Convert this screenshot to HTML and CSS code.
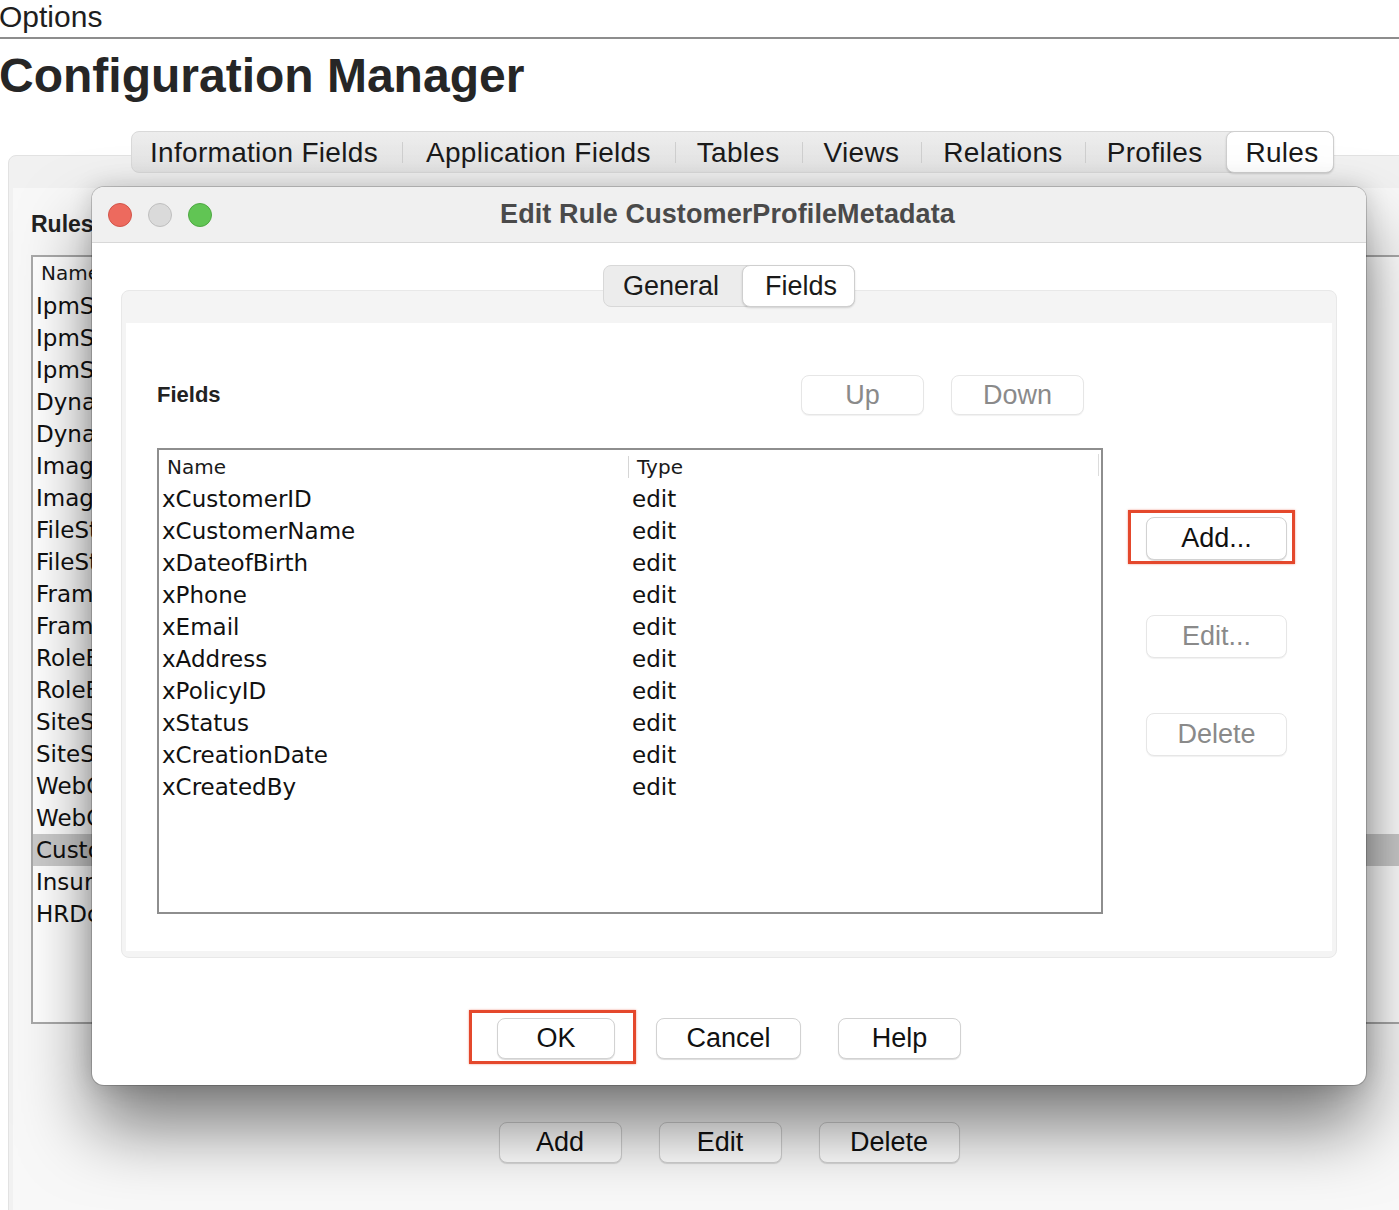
FILE: index.html
```html
<!DOCTYPE html>
<html lang="en">
<head>
<meta charset="utf-8">
<title>Configuration Manager</title>
<link rel="stylesheet" href="styles.css">
</head>
<body>
<div class="app">
  <div class="menubar"><span class="menu-title">Options</span></div>
  <h1 class="page-title">Configuration Manager</h1>

  <div class="workspace">
    <nav class="tabs">
      <span class="tab tab-wide tab-first">Information Fields</span>
      <span class="tab tab-wide">Application Fields</span>
      <span class="tab">Tables</span>
      <span class="tab">Views</span>
      <span class="tab">Relations</span>
      <span class="tab">Profiles</span>
      <span class="tab active">Rules</span>
    </nav>

    <section class="panel">
      <div class="panel-inner">
        <h2 class="section-label">Rules</h2>
        <div class="list">
          <div class="list-head">Name</div>
          <div class="list-row">IpmSystemRuleDefault</div>
          <div class="list-row">IpmSearchRuleDefault</div>
          <div class="list-row">IpmScanRuleDefault</div>
          <div class="list-row">DynamicConverterRule</div>
          <div class="list-row">DynamicConverterFields</div>
          <div class="list-row">ImageRenditionRule</div>
          <div class="list-row">ImageRenditionFields</div>
          <div class="list-row">FileStoreProviderRule</div>
          <div class="list-row">FileStoreProviderFields</div>
          <div class="list-row">FrameworkFoldersRule</div>
          <div class="list-row">FrameworkFoldersFields</div>
          <div class="list-row">RoleBasedAccessRule</div>
          <div class="list-row">RoleBasedAccessFields</div>
          <div class="list-row">SiteStudioRule</div>
          <div class="list-row">SiteStudioFields</div>
          <div class="list-row">WebCenterContentRule</div>
          <div class="list-row">WebCenterContentFields</div>
          <div class="list-row selected">CustomerProfileMetadata</div>
          <div class="list-row">InsurancePolicyMetadata</div>
          <div class="list-row">HRDocumentMetadata</div>
        </div>
        <div class="button-row">
          <button class="btn w-123">Add</button>
          <button class="btn w-123">Edit</button>
          <button class="btn w-141">Delete</button>
        </div>
      </div>
    </section>
  </div>

  <div class="dialog">
    <div class="titlebar">
      <div class="lights">
        <span class="light red"></span>
        <span class="light grey"></span>
        <span class="light green"></span>
      </div>
      <div class="title">Edit Rule CustomerProfileMetadata</div>
      <div></div>
    </div>

    <div class="dialog-body">
      <div class="segmented">
        <span class="seg">General</span>
        <span class="seg active">Fields</span>
      </div>

      <div class="tabpanel">
        <div class="tabpanel-inner">
          <div class="fields-head">
            <span class="fields-label">Fields</span>
            <div class="order-buttons">
              <button class="btn disabled w-123">Up</button>
              <button class="btn disabled w-133">Down</button>
            </div>
          </div>
          <div class="spacer"></div>

          <div class="ftable">
            <div class="fhead">
              <span class="hcell">Name</span>
              <span class="hcell type">Type</span>
            </div>
            <div class="frow"><span>xCustomerID</span><span class="tcell">edit</span></div>
            <div class="frow"><span>xCustomerName</span><span class="tcell">edit</span></div>
            <div class="frow"><span>xDateofBirth</span><span class="tcell">edit</span></div>
            <div class="frow"><span>xPhone</span><span class="tcell">edit</span></div>
            <div class="frow"><span>xEmail</span><span class="tcell">edit</span></div>
            <div class="frow"><span>xAddress</span><span class="tcell">edit</span></div>
            <div class="frow"><span>xPolicyID</span><span class="tcell">edit</span></div>
            <div class="frow"><span>xStatus</span><span class="tcell">edit</span></div>
            <div class="frow"><span>xCreationDate</span><span class="tcell">edit</span></div>
            <div class="frow"><span>xCreatedBy</span><span class="tcell">edit</span></div>
          </div>

          <div class="side-buttons">
            <button class="btn w-141 tall annot annot-add">Add...</button>
            <button class="btn disabled w-141 tall">Edit...</button>
            <button class="btn disabled w-141 tall">Delete</button>
          </div>
        </div>
      </div>

      <div class="dialog-actions">
        <button class="btn w-118 btn-ok annot annot-ok">OK</button>
        <button class="btn w-145">Cancel</button>
        <button class="btn w-123">Help</button>
      </div>
    </div>
  </div>
</div>
</body>
</html>
```

FILE: styles.css
```css
* { box-sizing: border-box; }

html, body {
  margin: 0;
  padding: 0;
}

body {
  background: #ffffff;
  font-family: "Liberation Sans", Arial, sans-serif;
  color: #1b1b1b;
}

.app {
  position: relative;
  width: 1399px;
  height: 1210px;
  overflow: hidden;
  background: #ffffff;
}

/* ---------- top header ---------- */
.menubar {
  height: 39px;
  border-bottom: 2px solid #8d8d8d;
  display: flex;
  align-items: flex-end;
  padding-bottom: 4px;
}

.menu-title {
  font-size: 30px;
  line-height: 32px;
  margin-left: -1px;
  color: #1e1e1e;
}

.page-title {
  margin: 9px 0 0 -1px;
  font-size: 48px;
  line-height: 56px;
  font-weight: bold;
  color: #262626;
}

/* ---------- main workspace ---------- */
.workspace {
  padding-top: 27px;
}

.tabs {
  display: flex;
  align-items: center;
  width: fit-content;
  height: 42px;
  margin-left: 131px;
  margin-bottom: -18px;
  position: relative;
  z-index: 1;
  background: linear-gradient(#ededed, #e3e3e3);
  border: 1px solid #d9d9d9;
  border-radius: 8px;
}

.tab {
  position: relative;
  font-size: 28px;
  letter-spacing: 0.3px;
  line-height: 41px;
  padding: 0 22px;
  color: #1a1a1a;
}

.tab-wide { padding: 0 24px; }

.tab-first { padding-left: 18px; }

.tab + .tab::before {
  content: "";
  position: absolute;
  left: 0;
  top: 10px;
  bottom: 10px;
  width: 1px;
  background: #cfcfcf;
}

.tab.active {
  height: 42px;
  line-height: 41px;
  margin: 0 -1px 0 2px;
  padding: 0 14px 0 18px;
  background: #ffffff;
  border: 1px solid #cfcfcf;
  border-radius: 8px;
  box-shadow: 0 1px 2px rgba(0, 0, 0, 0.15);
}

.tab.active::before { display: none; }

.panel {
  margin-left: 8px;
  width: 1443px;
  height: 1080px;
  background: #f1f1f1;
  border: 1px solid #e2e2e2;
  border-radius: 8px;
  padding: 32px 4px 0;
}

.panel-inner {
  height: 100%;
  background: #f8f8f8;
  padding: 23px 19px 0 18px;
}

.section-label {
  margin: 0 0 18px;
  font-size: 23px;
  line-height: 26px;
  font-weight: bold;
  color: #222;
}

.list {
  height: 769px;
  background: #ffffff;
  border: 2px solid #a9a9a9;
  font-family: "DejaVu Sans", sans-serif;
}

.list-head {
  height: 33px;
  line-height: 33px;
  padding-left: 8px;
  font-size: 20px;
  color: #1a1a1a;
}

.list-row {
  height: 32px;
  line-height: 32px;
  padding-left: 3px;
  font-size: 23px;
  color: #111;
  white-space: nowrap;
}

.list-row.selected {
  background: #cbcbcb;
}

.button-row {
  display: flex;
  justify-content: center;
  gap: 37px;
  margin-top: 98px;
}

/* ---------- buttons ---------- */
.btn {
  height: 41px;
  padding: 0;
  font-family: "Liberation Sans", Arial, sans-serif;
  font-size: 27px;
  color: #111111;
  background: #ffffff;
  border: 1px solid #d2d2d2;
  border-radius: 8px;
  box-shadow: 0 1px 1px rgba(0, 0, 0, 0.14);
}

.btn.tall { height: 43px; }

.btn.disabled {
  color: #8a8a8a;
  border-color: #e6e6e6;
  box-shadow: 0 1px 1px rgba(0, 0, 0, 0.06);
}

.w-118 { width: 118px; }
.w-123 { width: 123px; }
.w-133 { width: 133px; }
.w-141 { width: 141px; }
.w-145 { width: 145px; }

.annot { position: relative; }

.annot::after {
  content: "";
  position: absolute;
  border: 3px solid #e4482c;
  box-shadow: 0 0 2px rgba(228, 72, 44, 0.55);
  pointer-events: none;
}

.annot-add::after { left: -19px; right: -9px; top: -8px; bottom: -5px; }
.annot-ok::after { left: -29px; right: -22px; top: -9px; bottom: -6px; }

/* ---------- dialog ---------- */
.dialog {
  position: absolute;
  left: 92px;
  top: 187px;
  width: 1274px;
  height: 898px;
  z-index: 10;
  display: flex;
  flex-direction: column;
  background: #ffffff;
  border-radius: 12px;
  box-shadow:
    0 0 0 1px rgba(0, 0, 0, 0.18),
    0 42px 70px rgba(0, 0, 0, 0.5),
    0 0 24px rgba(0, 0, 0, 0.16);
}

.titlebar {
  height: 56px;
  display: grid;
  grid-template-columns: 1fr auto 1fr;
  align-items: center;
  padding: 0 16px;
  background: #f0f0f0;
  border-bottom: 1px solid #d8d8d8;
  border-radius: 12px 12px 0 0;
}

.lights {
  display: flex;
  gap: 16px;
}

.light {
  width: 24px;
  height: 24px;
  border-radius: 50%;
}

.light.red { background: #ed6a5e; border: 1px solid #d25449; }
.light.grey { background: #dadada; border: 1px solid #bfbfbf; }
.light.green { background: #61c554; border: 1px solid #4ea842; }

.title {
  font-size: 27px;
  font-weight: bold;
  color: #4a4a4a;
  letter-spacing: 0.1px;
  margin-right: 3px;
}

.dialog-body {
  flex: 1;
  display: flex;
  flex-direction: column;
  padding-top: 22px;
}

.segmented {
  align-self: center;
  display: flex;
  height: 42px;
  margin-bottom: -17px;
  position: relative;
  z-index: 1;
  background: #ececec;
  border: 1px solid #d8d8d8;
  border-radius: 8px;
}

.seg {
  font-size: 27px;
  line-height: 41px;
  padding: 0 23px 0 19px;
  color: #1a1a1a;
}

.seg.active {
  height: 42px;
  margin: -1px -1px -1px 0;
  padding: 0 17px 0 22px;
  line-height: 41px;
  background: #ffffff;
  border: 1px solid #cfcfcf;
  border-radius: 8px;
  box-shadow: 0 1px 2px rgba(0, 0, 0, 0.15);
}

.tabpanel {
  height: 668px;
  margin: 0 29px;
  padding: 32px 4px 6px;
  background: #f4f4f4;
  border: 1px solid #e8e8e8;
  border-radius: 8px;
}

.tabpanel-inner {
  height: 100%;
  background: #ffffff;
  padding: 52px 0 0 31px;
  display: grid;
  grid-template-columns: 946px 141px;
  grid-template-rows: 40px 466px;
  column-gap: 43px;
  row-gap: 33px;
}

.fields-head {
  display: flex;
  align-items: center;
  justify-content: space-between;
  padding-right: 19px;
}

.fields-label {
  font-size: 22px;
  font-weight: bold;
  color: #222;
}

.order-buttons {
  display: flex;
  gap: 27px;
}

.order-buttons .btn { height: 40px; }

.ftable {
  height: 466px;
  background: #ffffff;
  border: 2px solid #8e8e8e;
  font-family: "DejaVu Sans", sans-serif;
}

.fhead {
  position: relative;
  display: grid;
  grid-template-columns: 469px 1fr;
  height: 33px;
  align-items: center;
  font-size: 20px;
  color: #1a1a1a;
}

.fhead::after {
  content: "";
  position: absolute;
  right: 2px;
  top: 4px;
  height: 22px;
  width: 1px;
  background: #dcdcdc;
}

.hcell { padding-left: 8px; }

.hcell.type {
  position: relative;
  padding-left: 9px;
}

.hcell.type::before {
  content: "";
  position: absolute;
  left: 0;
  top: 1px;
  bottom: 1px;
  width: 1px;
  background: #d6d6d6;
}

.frow {
  display: grid;
  grid-template-columns: 469px 1fr;
  height: 32px;
  line-height: 32px;
  font-size: 23px;
  color: #111;
  padding-left: 3px;
}

.frow .tcell { padding-left: 1px; }

.side-buttons {
  display: flex;
  flex-direction: column;
  gap: 55px;
  padding-top: 69px;
}

.dialog-actions {
  display: flex;
  justify-content: center;
  gap: 37px;
  margin-top: 60px;
}

.btn-ok { margin-right: 4px; }
```
